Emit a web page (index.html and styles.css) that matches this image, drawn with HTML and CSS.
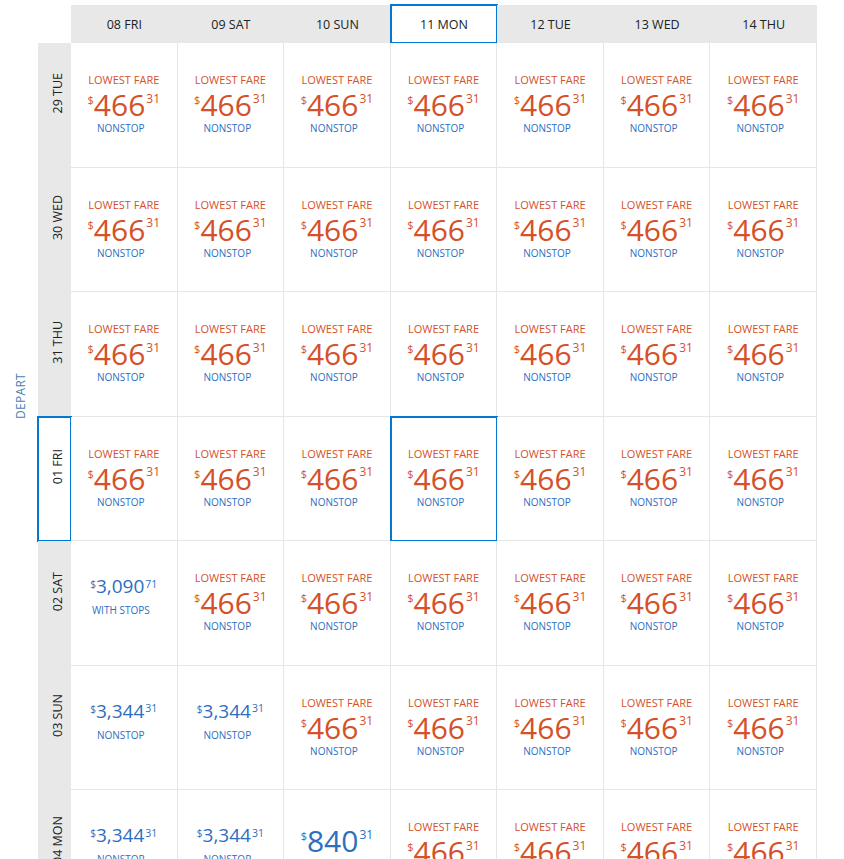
FILE: index.html
```html
<!DOCTYPE html>
<html lang="en">
<head>
<meta charset="utf-8">
<title>Fare calendar</title>
<link rel="stylesheet" href="styles.css">
</head>
<body>
<div class="page">
  <div class="axis"><span class="axis-label">DEPART</span></div>
  <div class="grid">
    <div class="corner"></div>
    <div class="colhead"><span class="day-num">08</span>&nbsp;FRI</div>
    <div class="colhead"><span class="day-num">09</span>&nbsp;SAT</div>
    <div class="colhead"><span class="day-num">10</span>&nbsp;SUN</div>
    <div class="colhead is-selected"><span class="day-num">11</span>&nbsp;MON</div>
    <div class="colhead"><span class="day-num">12</span>&nbsp;TUE</div>
    <div class="colhead"><span class="day-num">13</span>&nbsp;WED</div>
    <div class="colhead"><span class="day-num">14</span>&nbsp;THU</div>

    <!-- 29 TUE -->
    <div class="rowhead"><span class="rowhead-text">29 TUE</span></div>
    <div class="cell"><div class="fare-tag">LOWEST FARE</div><div class="price"><span class="price-cur">$</span><span class="price-main">466</span><span class="price-cents">31</span></div><div class="route">NONSTOP</div></div>
    <div class="cell"><div class="fare-tag">LOWEST FARE</div><div class="price"><span class="price-cur">$</span><span class="price-main">466</span><span class="price-cents">31</span></div><div class="route">NONSTOP</div></div>
    <div class="cell"><div class="fare-tag">LOWEST FARE</div><div class="price"><span class="price-cur">$</span><span class="price-main">466</span><span class="price-cents">31</span></div><div class="route">NONSTOP</div></div>
    <div class="cell"><div class="fare-tag">LOWEST FARE</div><div class="price"><span class="price-cur">$</span><span class="price-main">466</span><span class="price-cents">31</span></div><div class="route">NONSTOP</div></div>
    <div class="cell"><div class="fare-tag">LOWEST FARE</div><div class="price"><span class="price-cur">$</span><span class="price-main">466</span><span class="price-cents">31</span></div><div class="route">NONSTOP</div></div>
    <div class="cell"><div class="fare-tag">LOWEST FARE</div><div class="price"><span class="price-cur">$</span><span class="price-main">466</span><span class="price-cents">31</span></div><div class="route">NONSTOP</div></div>
    <div class="cell"><div class="fare-tag">LOWEST FARE</div><div class="price"><span class="price-cur">$</span><span class="price-main">466</span><span class="price-cents">31</span></div><div class="route">NONSTOP</div></div>

    <!-- 30 WED -->
    <div class="rowhead"><span class="rowhead-text">30 WED</span></div>
    <div class="cell"><div class="fare-tag">LOWEST FARE</div><div class="price"><span class="price-cur">$</span><span class="price-main">466</span><span class="price-cents">31</span></div><div class="route">NONSTOP</div></div>
    <div class="cell"><div class="fare-tag">LOWEST FARE</div><div class="price"><span class="price-cur">$</span><span class="price-main">466</span><span class="price-cents">31</span></div><div class="route">NONSTOP</div></div>
    <div class="cell"><div class="fare-tag">LOWEST FARE</div><div class="price"><span class="price-cur">$</span><span class="price-main">466</span><span class="price-cents">31</span></div><div class="route">NONSTOP</div></div>
    <div class="cell"><div class="fare-tag">LOWEST FARE</div><div class="price"><span class="price-cur">$</span><span class="price-main">466</span><span class="price-cents">31</span></div><div class="route">NONSTOP</div></div>
    <div class="cell"><div class="fare-tag">LOWEST FARE</div><div class="price"><span class="price-cur">$</span><span class="price-main">466</span><span class="price-cents">31</span></div><div class="route">NONSTOP</div></div>
    <div class="cell"><div class="fare-tag">LOWEST FARE</div><div class="price"><span class="price-cur">$</span><span class="price-main">466</span><span class="price-cents">31</span></div><div class="route">NONSTOP</div></div>
    <div class="cell"><div class="fare-tag">LOWEST FARE</div><div class="price"><span class="price-cur">$</span><span class="price-main">466</span><span class="price-cents">31</span></div><div class="route">NONSTOP</div></div>

    <!-- 31 THU -->
    <div class="rowhead"><span class="rowhead-text">31 THU</span></div>
    <div class="cell"><div class="fare-tag">LOWEST FARE</div><div class="price"><span class="price-cur">$</span><span class="price-main">466</span><span class="price-cents">31</span></div><div class="route">NONSTOP</div></div>
    <div class="cell"><div class="fare-tag">LOWEST FARE</div><div class="price"><span class="price-cur">$</span><span class="price-main">466</span><span class="price-cents">31</span></div><div class="route">NONSTOP</div></div>
    <div class="cell"><div class="fare-tag">LOWEST FARE</div><div class="price"><span class="price-cur">$</span><span class="price-main">466</span><span class="price-cents">31</span></div><div class="route">NONSTOP</div></div>
    <div class="cell"><div class="fare-tag">LOWEST FARE</div><div class="price"><span class="price-cur">$</span><span class="price-main">466</span><span class="price-cents">31</span></div><div class="route">NONSTOP</div></div>
    <div class="cell"><div class="fare-tag">LOWEST FARE</div><div class="price"><span class="price-cur">$</span><span class="price-main">466</span><span class="price-cents">31</span></div><div class="route">NONSTOP</div></div>
    <div class="cell"><div class="fare-tag">LOWEST FARE</div><div class="price"><span class="price-cur">$</span><span class="price-main">466</span><span class="price-cents">31</span></div><div class="route">NONSTOP</div></div>
    <div class="cell"><div class="fare-tag">LOWEST FARE</div><div class="price"><span class="price-cur">$</span><span class="price-main">466</span><span class="price-cents">31</span></div><div class="route">NONSTOP</div></div>

    <!-- 01 FRI -->
    <div class="rowhead is-selected"><span class="rowhead-text">01 FRI</span></div>
    <div class="cell"><div class="fare-tag">LOWEST FARE</div><div class="price"><span class="price-cur">$</span><span class="price-main">466</span><span class="price-cents">31</span></div><div class="route">NONSTOP</div></div>
    <div class="cell"><div class="fare-tag">LOWEST FARE</div><div class="price"><span class="price-cur">$</span><span class="price-main">466</span><span class="price-cents">31</span></div><div class="route">NONSTOP</div></div>
    <div class="cell"><div class="fare-tag">LOWEST FARE</div><div class="price"><span class="price-cur">$</span><span class="price-main">466</span><span class="price-cents">31</span></div><div class="route">NONSTOP</div></div>
    <div class="cell is-selected"><div class="fare-tag">LOWEST FARE</div><div class="price"><span class="price-cur">$</span><span class="price-main">466</span><span class="price-cents">31</span></div><div class="route">NONSTOP</div></div>
    <div class="cell"><div class="fare-tag">LOWEST FARE</div><div class="price"><span class="price-cur">$</span><span class="price-main">466</span><span class="price-cents">31</span></div><div class="route">NONSTOP</div></div>
    <div class="cell"><div class="fare-tag">LOWEST FARE</div><div class="price"><span class="price-cur">$</span><span class="price-main">466</span><span class="price-cents">31</span></div><div class="route">NONSTOP</div></div>
    <div class="cell"><div class="fare-tag">LOWEST FARE</div><div class="price"><span class="price-cur">$</span><span class="price-main">466</span><span class="price-cents">31</span></div><div class="route">NONSTOP</div></div>

    <!-- 02 SAT -->
    <div class="rowhead"><span class="rowhead-text">02 SAT</span></div>
    <div class="cell cell--other"><div class="price price--other price--sm"><span class="price-cur">$</span><span class="price-main">3,090</span><span class="price-cents">71</span></div><div class="route">WITH STOPS</div></div>
    <div class="cell"><div class="fare-tag">LOWEST FARE</div><div class="price"><span class="price-cur">$</span><span class="price-main">466</span><span class="price-cents">31</span></div><div class="route">NONSTOP</div></div>
    <div class="cell"><div class="fare-tag">LOWEST FARE</div><div class="price"><span class="price-cur">$</span><span class="price-main">466</span><span class="price-cents">31</span></div><div class="route">NONSTOP</div></div>
    <div class="cell"><div class="fare-tag">LOWEST FARE</div><div class="price"><span class="price-cur">$</span><span class="price-main">466</span><span class="price-cents">31</span></div><div class="route">NONSTOP</div></div>
    <div class="cell"><div class="fare-tag">LOWEST FARE</div><div class="price"><span class="price-cur">$</span><span class="price-main">466</span><span class="price-cents">31</span></div><div class="route">NONSTOP</div></div>
    <div class="cell"><div class="fare-tag">LOWEST FARE</div><div class="price"><span class="price-cur">$</span><span class="price-main">466</span><span class="price-cents">31</span></div><div class="route">NONSTOP</div></div>
    <div class="cell"><div class="fare-tag">LOWEST FARE</div><div class="price"><span class="price-cur">$</span><span class="price-main">466</span><span class="price-cents">31</span></div><div class="route">NONSTOP</div></div>

    <!-- 03 SUN -->
    <div class="rowhead"><span class="rowhead-text">03 SUN</span></div>
    <div class="cell cell--other"><div class="price price--other price--sm"><span class="price-cur">$</span><span class="price-main">3,344</span><span class="price-cents">31</span></div><div class="route">NONSTOP</div></div>
    <div class="cell cell--other"><div class="price price--other price--sm"><span class="price-cur">$</span><span class="price-main">3,344</span><span class="price-cents">31</span></div><div class="route">NONSTOP</div></div>
    <div class="cell"><div class="fare-tag">LOWEST FARE</div><div class="price"><span class="price-cur">$</span><span class="price-main">466</span><span class="price-cents">31</span></div><div class="route">NONSTOP</div></div>
    <div class="cell"><div class="fare-tag">LOWEST FARE</div><div class="price"><span class="price-cur">$</span><span class="price-main">466</span><span class="price-cents">31</span></div><div class="route">NONSTOP</div></div>
    <div class="cell"><div class="fare-tag">LOWEST FARE</div><div class="price"><span class="price-cur">$</span><span class="price-main">466</span><span class="price-cents">31</span></div><div class="route">NONSTOP</div></div>
    <div class="cell"><div class="fare-tag">LOWEST FARE</div><div class="price"><span class="price-cur">$</span><span class="price-main">466</span><span class="price-cents">31</span></div><div class="route">NONSTOP</div></div>
    <div class="cell"><div class="fare-tag">LOWEST FARE</div><div class="price"><span class="price-cur">$</span><span class="price-main">466</span><span class="price-cents">31</span></div><div class="route">NONSTOP</div></div>

    <!-- 04 MON -->
    <div class="rowhead"><span class="rowhead-text">04 MON</span></div>
    <div class="cell cell--other"><div class="price price--other price--sm"><span class="price-cur">$</span><span class="price-main">3,344</span><span class="price-cents">31</span></div><div class="route">NONSTOP</div></div>
    <div class="cell cell--other"><div class="price price--other price--sm"><span class="price-cur">$</span><span class="price-main">3,344</span><span class="price-cents">31</span></div><div class="route">NONSTOP</div></div>
    <div class="cell cell--other"><div class="price price--other"><span class="price-cur">$</span><span class="price-main">840</span><span class="price-cents">31</span></div><div class="route">NONSTOP</div></div>
    <div class="cell"><div class="fare-tag">LOWEST FARE</div><div class="price"><span class="price-cur">$</span><span class="price-main">466</span><span class="price-cents">31</span></div><div class="route">NONSTOP</div></div>
    <div class="cell"><div class="fare-tag">LOWEST FARE</div><div class="price"><span class="price-cur">$</span><span class="price-main">466</span><span class="price-cents">31</span></div><div class="route">NONSTOP</div></div>
    <div class="cell"><div class="fare-tag">LOWEST FARE</div><div class="price"><span class="price-cur">$</span><span class="price-main">466</span><span class="price-cents">31</span></div><div class="route">NONSTOP</div></div>
    <div class="cell"><div class="fare-tag">LOWEST FARE</div><div class="price"><span class="price-cur">$</span><span class="price-main">466</span><span class="price-cents">31</span></div><div class="route">NONSTOP</div></div>
  </div>
</div>
</body>
</html>
```

FILE: styles.css
```css
* {
  box-sizing: border-box;
}

html,
body {
  margin: 0;
  padding: 0;
  background: #ffffff;
  overflow: hidden;
}

body {
  font-family: "Open Sans", "Noto Sans", "DejaVu Sans", sans-serif;
  color: #222222;
}

.page {
  display: flex;
  align-items: flex-start;
  padding-top: 5px;
}

/* vertical axis caption */
.axis {
  width: 38px;
  flex: none;
  display: flex;
  padding-top: 368px;
  padding-left: 14px;
}

.axis-label {
  writing-mode: vertical-rl;
  transform: rotate(180deg);
  font-size: 12px;
  line-height: 14px;
  letter-spacing: 0.3px;
  color: #4a7fb0;
}

/* calendar grid */
.grid {
  display: grid;
  width: 779px;
  grid-template-columns: 33px repeat(7, 1fr);
  grid-template-rows: 38px;
  grid-auto-rows: 124.5px;
}

.corner {
  background: #ffffff;
}

.colhead {
  background: #e8e8e8;
  display: flex;
  align-items: center;
  justify-content: center;
  font-size: 12.5px;
  color: #222222;
}

.colhead.is-selected {
  background: #ffffff;
  outline: 2px solid #0078d4;
  outline-offset: -1px;
}

.day-num {
  font-weight: 500;
}

.rowhead {
  background: #e8e8e8;
  display: flex;
  align-items: center;
  justify-content: center;
  padding: 0 0 24px 6px;
}

.rowhead.is-selected {
  background: #ffffff;
  outline: 2px solid #0078d4;
  outline-offset: -1px;
}

.rowhead-text {
  writing-mode: vertical-rl;
  transform: rotate(180deg);
  font-size: 12.5px;
  line-height: 14px;
  color: #222222;
  white-space: nowrap;
}

.cell {
  background: #ffffff;
  border-right: 1px solid #e6e6e6;
  border-bottom: 1px solid #e6e6e6;
  display: flex;
  flex-direction: column;
  align-items: center;
  padding-top: 30px;
}

.cell--other {
  padding-top: 36px;
}

.cell.is-selected {
  outline: 2px solid #0078d4;
  outline-offset: -1px;
}

.fare-tag {
  font-size: 11px;
  line-height: 14px;
  color: #d4512a;
}

.price {
  display: flex;
  align-items: flex-start;
  margin-top: 3px;
  color: #d4512a;
}

.price--other {
  margin-top: 0;
  color: #2e6ec0;
}

.price-cur {
  font-size: 11px;
  line-height: 11px;
  margin-top: 4px;
}

.price-main {
  font-size: 30px;
  line-height: 30px;
}

.price-cents {
  font-size: 12px;
  line-height: 12px;
  margin-top: 2.5px;
  margin-left: 1px;
}

.price--sm .price-cur {
  font-size: 10px;
  line-height: 10px;
  margin-top: 2px;
}

.price--sm .price-main {
  font-size: 19px;
  line-height: 19px;
}

.price--sm .price-cents {
  font-size: 10.5px;
  line-height: 10px;
  margin-top: 1.5px;
}

.route {
  font-size: 10px;
  line-height: 14px;
  margin-top: 1px;
  padding-right: 6px;
  color: #2e6ec0;
}

.price--sm + .route {
  margin-top: 7px;
}
```
